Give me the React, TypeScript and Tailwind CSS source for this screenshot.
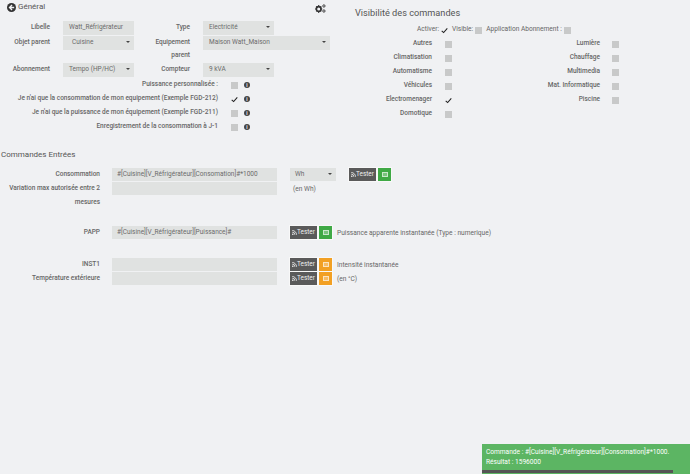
import React from "react";

const Caret = () => (
  <span className="absolute right-[4px] top-[5px] h-0 w-0 border-x-[2px] border-t-[2px] border-x-transparent border-t-[#444]" />
);

const Field = ({ w, children, pl = "pl-[6px]", select, h = "h-[14px]" }: { w: string; children?: React.ReactNode; pl?: string; select?: boolean; h?: string }) => (
  <div className={`relative flex shrink-0 items-center whitespace-nowrap bg-[#e0e2e1] text-[6.5px] text-[#6b6b6b] ${h} ${w} ${pl}`}>
    {children}
    {select && <Caret />}
  </div>
);

const Box = ({ on }: { on?: boolean }) =>
  on ? (
    <svg width="7" height="7" viewBox="0 0 8 8" className="block shrink-0">
      <path d="M0.8 4.4 L3 6.4 L7.2 1.6" fill="none" stroke="#222" strokeWidth="1.2" />
    </svg>
  ) : (
    <span className="block h-[7px] w-[7px] shrink-0 bg-[#c8c9c9]" />
  );

const Info = () => (
  <span className="flex h-[6px] w-[6px] shrink-0 items-center justify-center rounded-full bg-[#444] text-[5px] font-bold leading-none text-[#f0f1f3]">
    i
  </span>
);

const Label = ({ w, children }: { w: string; children: React.ReactNode }) => (
  <div className={`shrink-0 whitespace-nowrap text-right text-[6.5px] font-medium leading-[13px] text-[#666] ${w}`}>{children}</div>
);

const CheckRow = ({ label, on }: { label: string; on?: boolean }) => (
  <div className="flex h-[14px] items-center">
    <div className="w-[218px] shrink-0 whitespace-nowrap text-right text-[6.5px] font-medium text-[#666]">{label}</div>
    <div className="ml-[13px] w-[7px]">
      <Box on={on} />
    </div>
    <div className="ml-[6px]">
      <Info />
    </div>
  </div>
);

const VisItem = ({ label, w, on, gap }: { label: string; w: string; on?: boolean; gap: string }) => (
  <div className="flex h-[14px] items-center">
    <div className={`shrink-0 whitespace-nowrap text-right text-[6.5px] font-medium text-[#666] ${w}`}>{label}</div>
    <div className={gap}>
      <Box on={on} />
    </div>
  </div>
);

const Tester = ({ color }: { color: "green" | "orange" }) => (
  <div className="-ml-[1px] -mt-[1px] flex h-[15px] shrink-0">
    <div className="flex w-[29px] items-center justify-center whitespace-nowrap border border-[#f8f8f8] bg-[#5a5a5a] text-[6.4px] leading-none text-[#eee]">
      <svg width="5" height="5" viewBox="0 0 6 6" className="shrink-0">
        <circle cx="1" cy="5" r="0.9" fill="#fff" />
        <path d="M0.3 2.6 A3 3 0 0 1 3.4 5.7 M0.3 0.6 A5 5 0 0 1 5.4 5.7" fill="none" stroke="#fff" strokeWidth="0.9" />
      </svg>
      Tester
    </div>
    <div className={`flex w-[15px] items-center justify-center border border-[#f8f8f8] ${color === "green" ? "bg-[#3fa945]" : "bg-[#f2a023]"}`}>
      <span className="block h-[5px] w-[6px] border border-white/60 bg-white/30" />
    </div>
  </div>
);

const CmdLabel = ({ children }: { children: React.ReactNode }) => (
  <div className="w-[100px] shrink-0 text-right text-[6.5px] font-medium leading-[13.5px] text-[#666]">{children}</div>
);

const Note = ({ children }: { children: React.ReactNode }) => (
  <div className="ml-[4px] whitespace-nowrap text-[6.6px] leading-[14px] text-[#666]">{children}</div>
);

export default function App() {
  return (
    <div className="relative h-[474px] w-[690px] overflow-hidden bg-[#f0f1f3] font-['Roboto',sans-serif] antialiased">
      <div className="flex">
        <section className="w-[345px] shrink-0">
          <div className="flex h-[21px] w-[326px] items-start justify-between pt-[1px]">
            <div className="ml-[7px] flex items-center gap-[2px]">
              <svg width="9" height="9" viewBox="0 0 10 10">
                <circle cx="5" cy="5" r="5" fill="#333" />
                <path d="M5.6 2.2 L2.8 5 L5.6 7.8 M3 5 H8" fill="none" stroke="#f0f1f3" strokeWidth="1.5" />
              </svg>
              <span className="text-[8px] leading-[12px] text-[#555]">Général</span>
            </div>
            <svg width="11" height="9" viewBox="0 0 12 10" className="mt-[3px]">
              <circle cx="4" cy="5.5" r="2.6" fill="none" stroke="#333" strokeWidth="1.8" />
              <path d="M4 1 V2.5 M4 8.5 V10 M0 5.5 H1.5 M6.5 5.5 H8 M1.2 2.7 L2.2 3.7 M5.8 7.3 L6.8 8.3 M6.8 2.7 L5.8 3.7 M2.2 7.3 L1.2 8.3" stroke="#333" strokeWidth="1.2" />
              <circle cx="9.8" cy="2.2" r="1.3" fill="none" stroke="#333" strokeWidth="1" />
              <circle cx="9.8" cy="7.8" r="1.3" fill="none" stroke="#333" strokeWidth="1" />
            </svg>
          </div>

          <div className="flex h-[15px] items-start">
            <Label w="w-[50px]">Libelle</Label>
            <div className="ml-[13px]"><Field w="w-[71px]">Watt_Réfrigérateur</Field></div>
            <Label w="w-[56px]">Type</Label>
            <div className="ml-[13px]"><Field w="w-[71px]" select>Electricité</Field></div>
          </div>
          <div className="flex h-[27px] items-start">
            <Label w="w-[50px]">Objet parent</Label>
            <div className="ml-[13px]"><Field w="w-[71px]" pl="pl-[9px]" select>Cuisine</Field></div>
            <Label w="w-[56px]">Equipement<br />parent</Label>
            <div className="ml-[13px]"><Field w="w-[127px]" select>Maison Watt_Maison</Field></div>
          </div>
          <div className="flex h-[15px] items-start">
            <Label w="w-[50px]">Abonnement</Label>
            <div className="ml-[13px]"><Field w="w-[71px]" select>Tempo (HP/HC)</Field></div>
            <Label w="w-[56px]">Compteur</Label>
            <div className="ml-[13px]"><Field w="w-[71px]" select>9 kVA</Field></div>
          </div>
          <div>
            <CheckRow label="Puissance personnalisée :" />
            <CheckRow label="Je n'ai que la consommation de mon equipement (Exemple FGD-212)" on />
            <CheckRow label="Je n'ai que la puissance de mon équipement (Exemple FGD-211)" />
            <CheckRow label="Enregistrement de la consommation à J-1" />
          </div>
        </section>

        <section className="min-w-0 flex-1">
          <div className="ml-[10px] mt-[6px] text-[9.2px] leading-[13px] text-[#555]">Visibilité des commandes</div>
          <div className="mt-[4px] flex h-[14px] items-center whitespace-nowrap text-[6.6px] text-[#666]">
            <span className="ml-[72px]">Activer:</span>
            <span className="ml-[2px]"><Box on /></span>
            <span className="ml-[4px]">Visible:</span>
            <span className="ml-[2px]"><Box /></span>
            <span className="ml-[4px]">Application Abonnement :</span>
            <span className="ml-[2px]"><Box /></span>
          </div>
          <div className="flex">
            <div className="w-[167px] shrink-0">
              <VisItem w="w-[87px]" gap="ml-[13px]" label="Autres" />
              <VisItem w="w-[87px]" gap="ml-[13px]" label="Climatisation" />
              <VisItem w="w-[87px]" gap="ml-[13px]" label="Automatisme" />
              <VisItem w="w-[87px]" gap="ml-[13px]" label="Véhicules" />
              <VisItem w="w-[87px]" gap="ml-[13px]" label="Electromenager" on />
              <VisItem w="w-[87px]" gap="ml-[13px]" label="Domotique" />
            </div>
            <div>
              <VisItem w="w-[88px]" gap="ml-[12px]" label="Lumière" />
              <VisItem w="w-[88px]" gap="ml-[12px]" label="Chauffage" />
              <VisItem w="w-[88px]" gap="ml-[12px]" label="Multimedia" />
              <VisItem w="w-[88px]" gap="ml-[12px]" label="Mat. Informatique" />
              <VisItem w="w-[88px]" gap="ml-[12px]" label="Piscine" />
            </div>
          </div>
        </section>
      </div>

      <section className="mt-[15px]">
        <div className="ml-[1px] h-[19px] text-[8px] leading-[12px] text-[#555]">Commandes Entrées</div>
        <div className="flex h-[14px] items-start">
          <CmdLabel>Consommation</CmdLabel>
          <div className="ml-[12px]"><Field w="w-[165px]" h="h-[13px]" pl="pl-[5px]">#[Cuisine][V_Réfrigérateur][Consomation]#*1000</Field></div>
          <div className="ml-[13px]"><Field w="w-[46px]" h="h-[13px]" pl="pl-[5px]" select>Wh</Field></div>
          <div className="ml-[13px]"><Tester color="green" /></div>
        </div>
        <div className="flex h-[44px] items-start">
          <CmdLabel>Variation max autorisée entre 2 mesures</CmdLabel>
          <div className="ml-[12px]"><Field w="w-[165px]" h="h-[13px]" /></div>
          <div className="ml-[16px] text-[6.6px] leading-[14px] text-[#666]">(en Wh)</div>
        </div>
        <div className="flex h-[32px] items-start">
          <CmdLabel>PAPP</CmdLabel>
          <div className="ml-[12px]"><Field w="w-[165px]" h="h-[13px]" pl="pl-[5px]">#[Cuisine][V_Réfrigérateur][Puissance]#</Field></div>
          <div className="ml-[13px]"><Tester color="green" /></div>
          <Note>Puissance apparente instantanée (Type : numerique)</Note>
        </div>
        <div className="flex h-[14px] items-start">
          <CmdLabel>INST1</CmdLabel>
          <div className="ml-[12px]"><Field w="w-[165px]" h="h-[13px]" /></div>
          <div className="ml-[13px]"><Tester color="orange" /></div>
          <Note>Intensité instantanée</Note>
        </div>
        <div className="flex h-[14px] items-start">
          <CmdLabel>Température extérieure</CmdLabel>
          <div className="ml-[12px]"><Field w="w-[165px]" h="h-[13px]" /></div>
          <div className="ml-[13px]"><Tester color="orange" /></div>
          <Note>(en °C)</Note>
        </div>
      </section>

      <div className="absolute bottom-0 right-0 h-[30px] w-[208px] whitespace-nowrap bg-[#5cb563] px-[4px] pt-[3px] text-[6.6px] leading-[10px] text-white">
        <div>Commande : #[Cuisine][V_Réfrigérateur][Consomation]#*1000.</div>
        <div>Résultat : 1596000</div>
        <div className="absolute bottom-[1px] left-0 h-[3px] w-[191px] bg-[#555]" />
      </div>
    </div>
  );
}
